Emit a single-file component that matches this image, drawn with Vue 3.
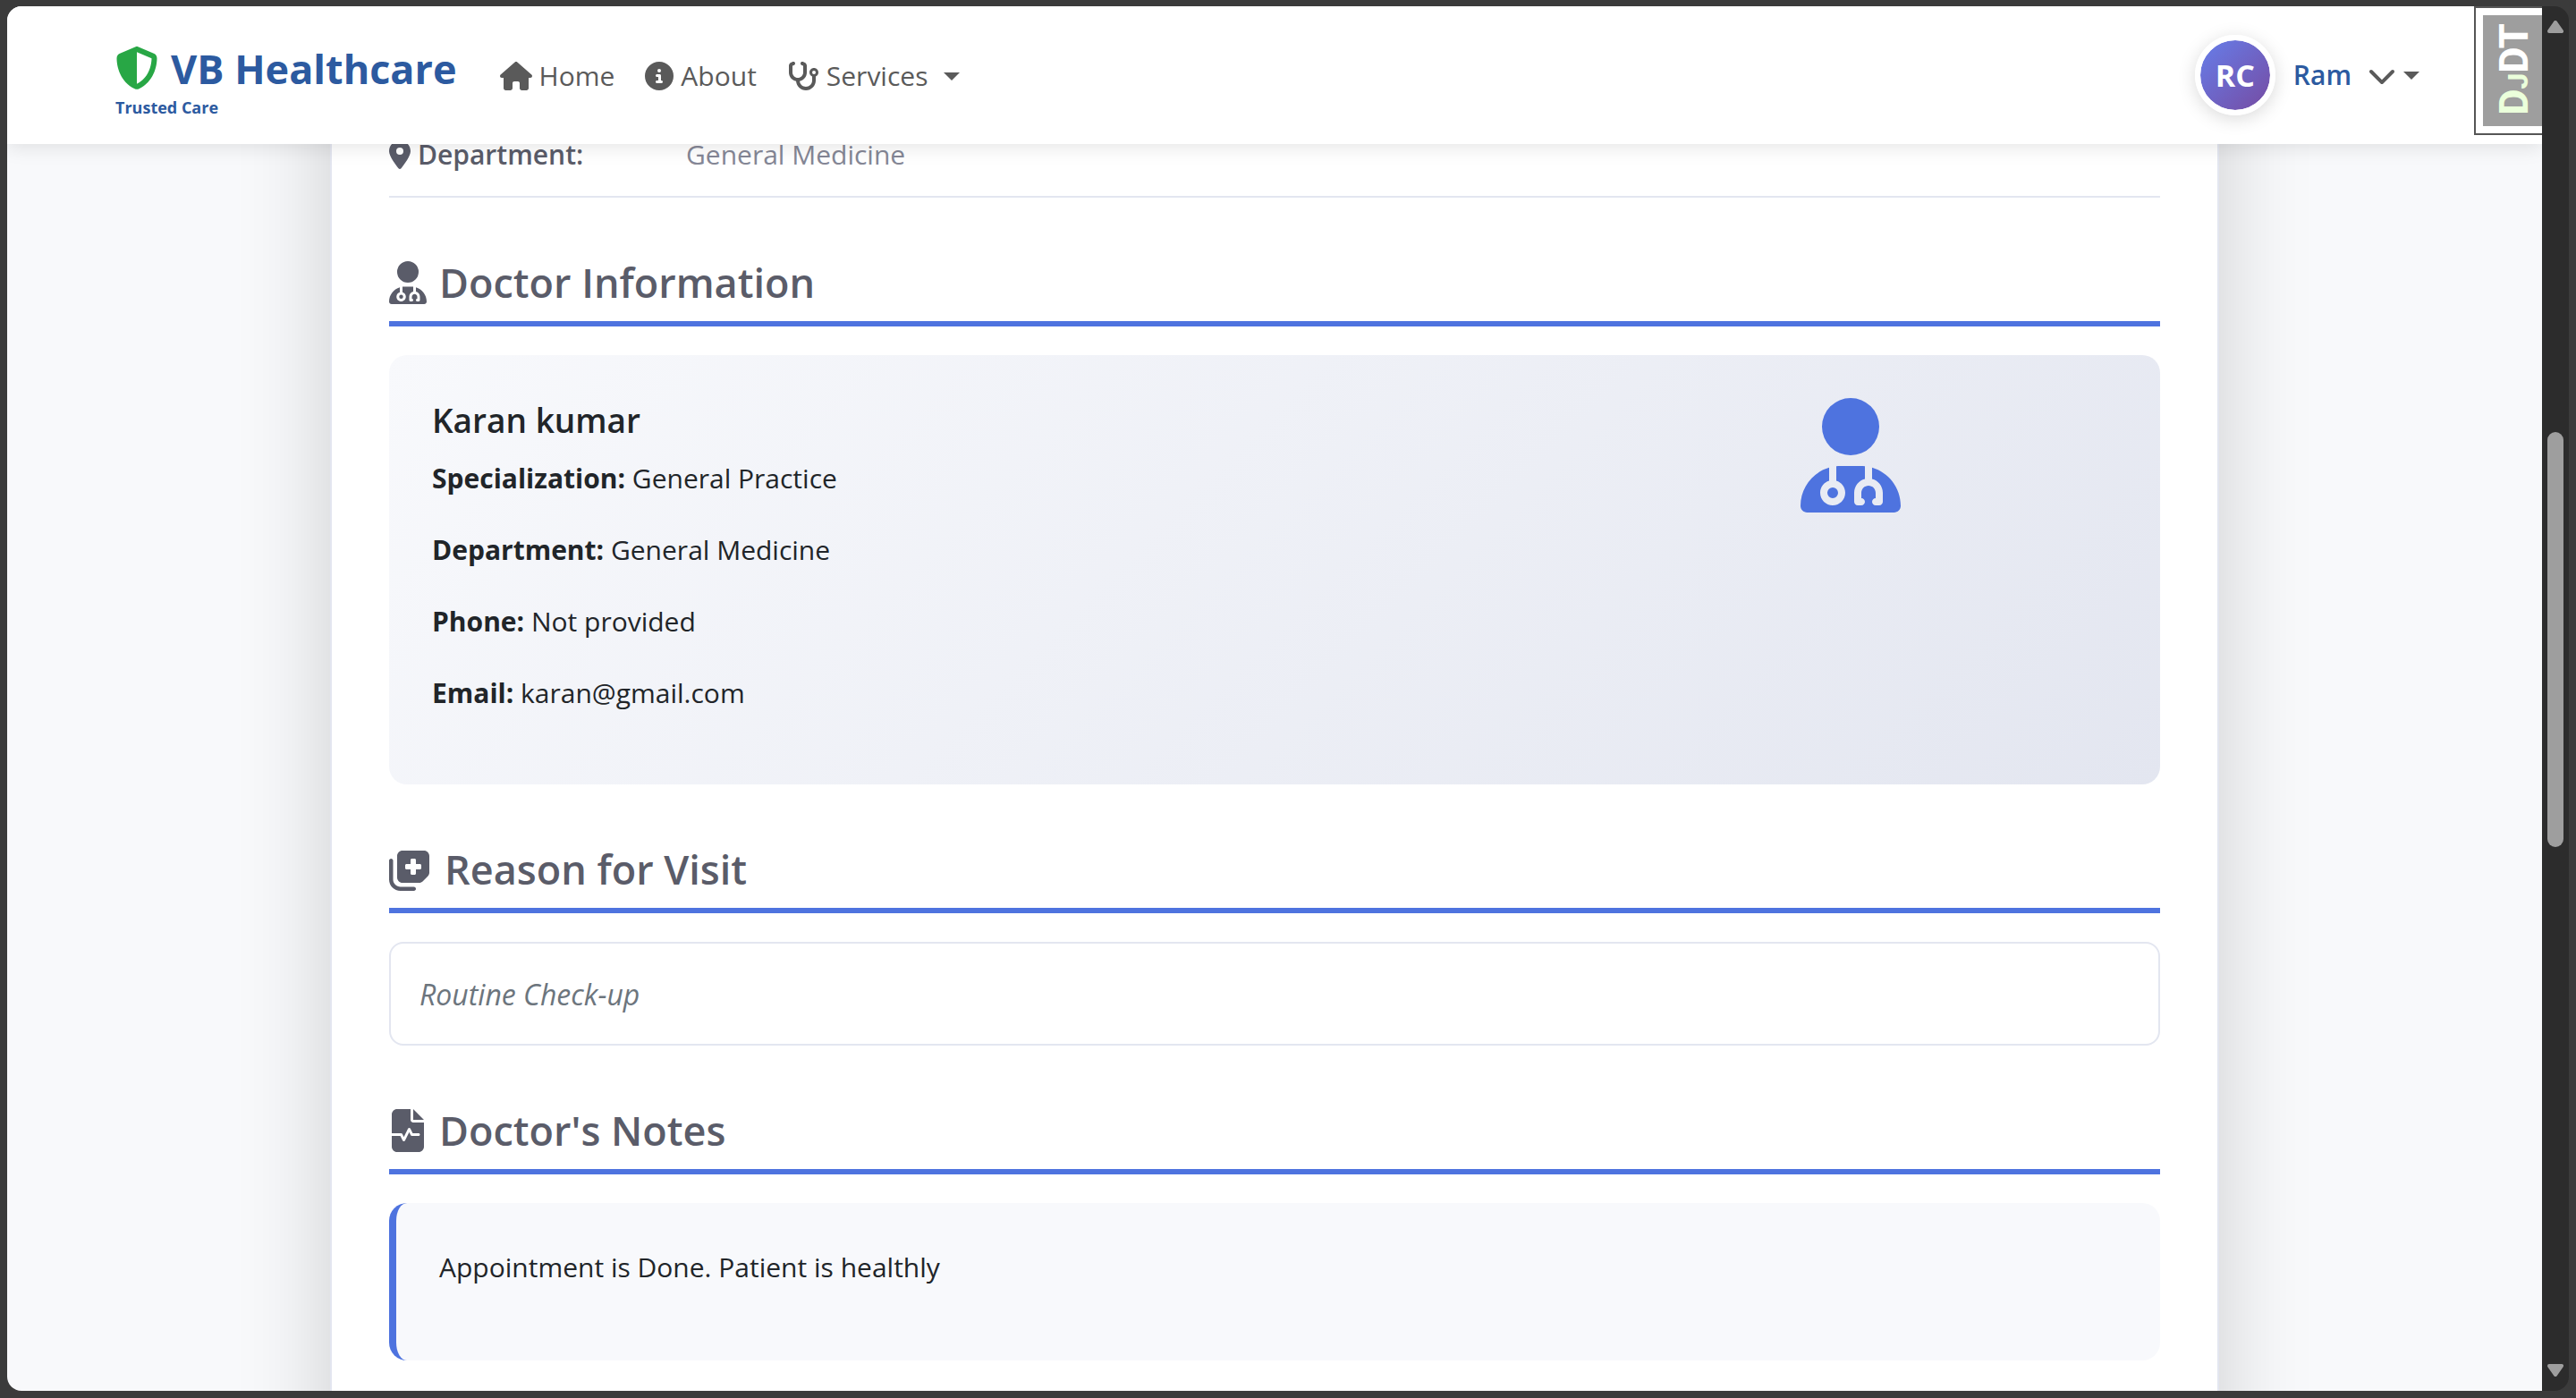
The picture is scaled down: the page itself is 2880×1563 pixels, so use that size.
<script setup>
const icons = {
  shield: { w: 512, d: 'M256 0c4.6 0 9.2 1 13.4 2.9L457.7 82.8c22 9.3 38.4 31 38.3 57.2c-.5 99.2-41.3 280.7-213.6 363.2c-16.7 8-36.1 8-52.8 0C57.3 420.7 16.5 239.2 16 140c-.1-26.2 16.3-47.9 38.3-57.2L242.7 2.9C246.8 1 251.4 0 256 0zm0 66.8V444.8C394 378 431.1 230.1 432 141.4L256 66.8z' },
  home: { w: 576, d: 'M575.8 255.5c0 18-15 32.1-32 32.1h-32l.7 160.2c0 2.7-.2 5.4-.5 8.1V472c0 22.1-17.9 40-40 40H456c-1.1 0-2.2 0-3.3-.1c-1.4 .1-2.8 .1-4.2 .1H416 392c-22.1 0-40-17.9-40-40V448 384c0-17.7-14.3-32-32-32H256c-17.7 0-32 14.3-32 32v64 24c0 22.1-17.9 40-40 40H160 128.1c-1.5 0-3-.1-4.5-.2c-1.2 .1-2.4 .2-3.6 .2H104c-22.1 0-40-17.9-40-40V360c0-.9 0-1.9 .1-2.8V287.6H32c-18 0-32-14-32-32.1c0-9 3-17 10-24L266.4 8c7-7 15-8 22-8s15 2 21 7L564.8 231.5c8 7 12 15 11 24z' },
  info: { w: 512, d: 'M256 512A256 256 0 1 0 256 0a256 256 0 1 0 0 512zM216 336h24V272H216c-13.3 0-24-10.7-24-24s10.7-24 24-24h48c13.3 0 24 10.7 24 24v88h8c13.3 0 24 10.7 24 24s-10.7 24-24 24H216c-13.3 0-24-10.7-24-24s10.7-24 24-24zm40-208a32 32 0 1 1 0 64 32 32 0 1 1 0-64z' },
  stethoscope: { w: 576, d: 'M142.4 21.9c5.6 16.8-3.5 34.9-20.2 40.5L96 71.1V192c0 53 43 96 96 96s96-43 96-96V71.1l-26.1-8.7c-16.8-5.6-25.8-23.7-20.2-40.5s23.7-25.8 40.5-20.2l26.1 8.7C334.4 19.1 352 43.5 352 71.1V192c0 77.2-54.6 141.6-127.3 156.7C231 404.6 278.4 448 336 448c61.9 0 112-50.1 112-112V265.3c-28.3-12.3-48-40.5-48-73.3c0-44.2 35.8-80 80-80s80 35.8 80 80c0 32.8-19.7 61-48 73.3V336c0 97.2-78.8 176-176 176c-92.9 0-168.9-71.9-175.5-163.1C87.2 334.2 32 269.6 32 192V71.1c0-27.5 17.6-52 43.8-60.7l26.1-8.7c16.8-5.6 34.9 3.5 40.5 20.2zM480 224a32 32 0 1 0 0-64 32 32 0 1 0 0 64z' },
  chevron: { w: 512, d: 'M233.4 406.6c12.5 12.5 32.8 12.5 45.3 0l192-192c12.5-12.5 12.5-32.8 0-45.3s-32.8-12.5-45.3 0L256 338.7 86.6 169.4c-12.5-12.5-32.8-12.5-45.3 0s-12.5 32.8 0 45.3l192 192z' },
  pin: { w: 384, d: 'M215.7 499.2C267 435 384 279.4 384 192C384 86 298 0 192 0S0 86 0 192c0 87.4 117 243 168.3 307.2c12.3 15.3 35.1 15.3 47.4 0zM192 128a64 64 0 1 1 0 128 64 64 0 1 1 0-128z' },
  doctor: { w: 448, d: 'M224 256A128 128 0 1 0 224 0a128 128 0 1 0 0 256zm-96 55.2C54 332.9 0 401.3 0 482.3C0 498.7 13.3 512 29.7 512H418.3c16.4 0 29.7-13.3 29.7-29.7c0-81-54-149.4-128-171.1V362c27.6 7.1 48 32.2 48 62v40c0 8.8-7.2 16-16 16H336c-8.8 0-16-7.2-16-16s7.2-16 16-16V424c0-17.7-14.3-32-32-32s-32 14.3-32 32v24c8.8 0 16 7.2 16 16s-7.2 16-16 16H256c-8.8 0-16-7.2-16-16V424c0-29.8 20.4-54.9 48-62V304.9c-6-.6-12.1-.9-18.3-.9H178.3c-6.2 0-12.3 .3-18.3 .9v65.4c23.1 6.9 40 28.3 40 53.7c0 30.9-25.1 56-56 56s-56-25.1-56-56c0-25.4 16.9-46.8 40-53.7V311.2zM144 448a24 24 0 1 0 0-48 24 24 0 1 0 0 48z' },
  reason: { w: 512, d: 'M96 352V96c0-35.3 28.7-64 64-64H416c35.3 0 64 28.7 64 64V293.5c0 17-6.7 33.3-18.7 45.3l-58.5 58.5c-12 12-28.3 18.7-45.3 18.7H160c-35.3 0-64-28.7-64-64zM272 128c-8.8 0-16 7.2-16 16v48H208c-8.8 0-16 7.2-16 16v32c0 8.8 7.2 16 16 16h48v48c0 8.8 7.2 16 16 16h32c8.8 0 16-7.2 16-16V256h48c8.8 0 16-7.2 16-16V208c0-8.8-7.2-16-16-16H320V144c0-8.8-7.2-16-16-16H272zm24 336c13.3 0 24 10.7 24 24s-10.7 24-24 24H136C60.9 512 0 451.1 0 376V152c0-13.3 10.7-24 24-24s24 10.7 24 24V376c0 48.6 39.4 88 88 88H296z' },
  notes: { w: 448, d: 'M96 0C60.7 0 32 28.7 32 64V288H144c6.1 0 11.6 3.4 14.3 8.8L176 332.2l49.7-99.4c2.7-5.4 8.3-8.8 14.3-8.8s11.6 3.4 14.3 8.8L281.9 288H352c8.8 0 16 7.2 16 16s-7.2 16-16 16H272c-6.1 0-11.6-3.4-14.3-8.8L240 275.8l-49.7 99.4c-2.7 5.4-8.3 8.8-14.3 8.8s-11.6-3.4-14.3-8.8L134.1 320H32V448c0 35.3 28.7 64 64 64H352c35.3 0 64-28.7 64-64V160H288c-17.7 0-32-14.3-32-32V0H96zM288 0V128H416L288 0z' },
}

const links = [
  { label: 'Home', icon: 'home' },
  { label: 'About', icon: 'info' },
  { label: 'Services', icon: 'stethoscope', menu: true },
]

const doctor = {
  name: 'Karan kumar',
  details: [
    { label: 'Specialization:', value: 'General Practice' },
    { label: 'Department:', value: 'General Medicine' },
    { label: 'Phone:', value: 'Not provided' },
    { label: 'Email:', value: 'karan@gmail.com' },
  ],
}

const box = (name) => `0 0 ${icons[name].w} 512`
</script>

<template>
  <div class="window">
    <div class="pane">
      <div class="page">
        <header class="navbar">
          <a class="brand" href="#">
            <span class="brand-name">
              <svg class="icon brand-icon" :viewBox="box('shield')" aria-hidden="true"><path :d="icons.shield.d" /></svg>
              VB Healthcare
            </span>
            <small class="tagline">Trusted Care</small>
          </a>
          <nav class="links">
            <a v-for="link in links" :key="link.label" class="link" href="#">
              <svg class="icon" :viewBox="box(link.icon)" aria-hidden="true"><path :d="icons[link.icon].d" /></svg>
              {{ link.label }}
              <span v-if="link.menu" class="caret menu-caret"></span>
            </a>
          </nav>
          <button class="account" type="button">
            <span class="avatar">RC</span>
            <span class="user">Ram</span>
            <svg class="icon" :viewBox="box('chevron')" aria-hidden="true"><path :d="icons.chevron.d" /></svg>
            <span class="caret"></span>
          </button>
        </header>

        <main class="main">
          <article class="card">
            <dl class="row">
              <dt>
                <svg class="icon" :viewBox="box('pin')" aria-hidden="true"><path :d="icons.pin.d" /></svg>
                Department:
              </dt>
              <dd>General Medicine</dd>
            </dl>

            <section>
              <h3 class="title">
                <svg class="icon" :viewBox="box('doctor')" aria-hidden="true"><path :d="icons.doctor.d" /></svg>
                Doctor Information
              </h3>
              <div class="doctor">
                <div class="doctor-body">
                  <h4 class="doctor-name">{{ doctor.name }}</h4>
                  <p v-for="item in doctor.details" :key="item.label" class="text">
                    <strong>{{ item.label }}</strong> {{ item.value }}
                  </p>
                </div>
                <svg class="doctor-icon" :viewBox="box('doctor')" aria-hidden="true"><path :d="icons.doctor.d" /></svg>
              </div>
            </section>

            <section>
              <h3 class="title">
                <svg class="icon" :viewBox="box('reason')" aria-hidden="true"><path :d="icons.reason.d" /></svg>
                Reason for Visit
              </h3>
              <div class="reason"><em>Routine Check-up</em></div>
            </section>

            <section>
              <h3 class="title">
                <svg class="icon" :viewBox="box('notes')" aria-hidden="true"><path :d="icons.notes.d" /></svg>
                Doctor's Notes
              </h3>
              <div class="notes">
                <p class="text">Appointment is Done. Patient is healthly</p>
              </div>
            </section>
          </article>
        </main>

        <a class="debug" href="#"><span class="debug-label"><span class="debug-d">D</span><span class="debug-j">J</span>DT</span></a>
      </div>

      <div class="scrollbar" aria-hidden="true">
        <svg class="arrow" viewBox="0 0 18 14"><path d="M9 2L16 12H2z" /></svg>
        <div class="track"><div class="thumb"></div></div>
        <svg class="arrow" viewBox="0 0 18 14"><path d="M9 12L16 2H2z" /></svg>
      </div>
    </div>
  </div>
</template>

<style>
body {
  margin: 0;
  background: #3b3b3b;
}
</style>

<style scoped>
.window,
.window * {
  box-sizing: border-box;
}

.window {
  display: flex;
  min-height: 100vh;
  padding: 7px 8px 8px;
  background: #3b3b3b;
  color: #212529;
  font-family: "Open Sans", "Noto Sans", sans-serif;
  font-size: 30px;
  line-height: 48px;
}

.pane {
  display: flex;
  flex: 1;
  min-width: 0;
  overflow: hidden;
  border-radius: 16px;
}

.page {
  position: relative;
  display: flex;
  flex: 1;
  flex-direction: column;
  min-width: 0;
  overflow: hidden;
  background: #f8f9fb;
}

.icon {
  flex: none;
  height: 32px;
  fill: currentColor;
}

/* Top bar */
.navbar {
  position: relative;
  z-index: 2;
  display: flex;
  align-items: center;
  height: 154px;
  padding: 0 137px 0 121px;
  background: #fff;
  box-shadow: 0 4px 20px rgba(0, 0, 0, 0.1);
}

.brand {
  display: flex;
  flex-direction: column;
  margin-top: 14px;
  color: #2c5aa0;
  font-weight: 700;
  text-decoration: none;
}

.brand-name {
  display: flex;
  align-items: center;
  gap: 14px;
  font-size: 45px;
  line-height: 58px;
}

.brand-icon {
  height: 48px;
  margin-bottom: 2px;
  fill: #28a745;
}

.tagline {
  font-size: 18px;
  line-height: 28px;
}

.links {
  display: flex;
  gap: 34px;
  margin: 2px 0 0 48px;
}

.link {
  display: flex;
  align-items: center;
  gap: 8px;
  color: #5a5a5a;
  text-decoration: none;
}

.caret {
  border: 9px solid transparent;
  border-top-color: #5a5a5a;
  border-bottom: 0;
}

.menu-caret {
  margin-left: 10px;
}

.account {
  display: flex;
  align-items: center;
  gap: 8px;
  margin-left: auto;
  padding: 0;
  border: 0;
  background: none;
  color: #5a5a5a;
  font: inherit;
}

.avatar {
  display: flex;
  align-items: center;
  justify-content: center;
  width: 90px;
  height: 90px;
  border: 6px solid #fff;
  border-radius: 50%;
  background: linear-gradient(135deg, #667eea, #764ba2) padding-box;
  box-shadow: 0 4px 20px rgba(0, 0, 0, 0.15);
  color: #fff;
  font-size: 34px;
  font-weight: 700;
}

.user {
  margin: 0 10px 0 12px;
  color: #2c5aa0;
  font-weight: 600;
}

/* Appointment card, scrolled beneath the bar */
.main {
  display: flex;
  flex: 1;
  justify-content: center;
  margin-top: -154px;
  padding: 0 24px;
}

.card {
  flex: 1;
  max-width: 2112px;
  margin-bottom: -96px;
  padding: 116px 64px 128px;
  border: solid #e3e6f0;
  border-width: 0 2px;
  background: #fff;
  box-shadow: 0 32px 96px rgba(0, 0, 0, 0.175);
}

.row {
  display: flex;
  margin: 0;
  padding: 26px 0 22px;
  border-bottom: 2px solid #e3e6f0;
}

.row dt {
  display: flex;
  align-items: center;
  gap: 8px;
  width: 332px;
  color: #5a5c69;
  font-weight: 600;
}

.row dd {
  margin: 0;
  color: #858796;
}

.title {
  display: flex;
  align-items: center;
  gap: 14px;
  margin: 66px 0 32px;
  padding-bottom: 14px;
  border-bottom: 6px solid #4e73df;
  color: #5a5c69;
  font-size: 45px;
  font-weight: 600;
  line-height: 58px;
}

.title .icon {
  height: 48px;
}

.text {
  margin: 0 0 32px;
}

.doctor {
  display: grid;
  grid-template-columns: 2fr 1fr;
  padding: 48px 24px;
  border-radius: 20px;
  background: linear-gradient(135deg, #f8f9fc, #e3e6f0);
}

.doctor-body {
  padding: 0 24px;
}

.doctor-name {
  margin: 0 0 16px;
  font-size: 37px;
  font-weight: 600;
  line-height: 50px;
}

.doctor-body .text:last-child {
  margin-bottom: 30px;
}

.doctor-icon {
  justify-self: center;
  height: 128px;
  fill: #4e73df;
}

.reason {
  padding: 33px 32px 31px;
  border: 2px solid #e3e6f0;
  border-radius: 16px;
  color: #6c757d;
  font-size: 32px;
}

.notes {
  padding: 48px;
  border-left: 8px solid #4e73df;
  border-radius: 20px;
  background: #f8f9fc;
}

/* Debug toolbar handle */
.debug {
  position: absolute;
  z-index: 3;
  top: 0;
  right: 0;
  width: 76px;
  height: 144px;
  padding: 8px 0 8px 8px;
  border: 2px solid #565656;
  border-right: 0;
  background: #fff;
  color: #fff;
  text-decoration: none;
}

.debug-label {
  display: block;
  width: 100%;
  height: 100%;
  padding: 12px 0;
  background: #9e9e9e;
  font-family: Roboto, sans-serif;
  font-size: 45px;
  font-weight: 800;
  line-height: 70px;
  writing-mode: sideways-lr;
}

.debug-d,
.debug-j {
  color: #ebffdb;
}

.debug-j {
  font-size: 32px;
}

/* Scrollbar */
.scrollbar {
  display: flex;
  flex: none;
  flex-direction: column;
  align-items: center;
  width: 30px;
  padding: 16px 0;
  background: #2c2c2c;
}

.arrow {
  width: 18px;
  height: 14px;
  fill: #9e9e9e;
  stroke: #9e9e9e;
  stroke-width: 4;
  stroke-linejoin: round;
}

.track {
  display: flex;
  flex: 1;
  flex-direction: column;
}

.track::before {
  flex: 446;
  content: "";
}

.track::after {
  flex: 578;
  content: "";
}

.thumb {
  flex: 464;
  width: 18px;
  border-radius: 9px;
  background: #9e9e9e;
}
</style>
